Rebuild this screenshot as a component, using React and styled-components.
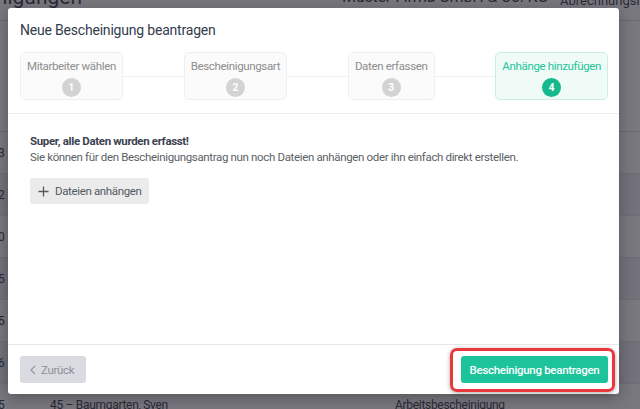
import React from "react";
import styled, { createGlobalStyle } from "styled-components";

const GlobalStyle = createGlobalStyle`
  html, body {
    margin: 0;
    padding: 0;
  }
  body {
    font-family: Roboto, "Liberation Sans", Arial, sans-serif;
    background: #ffffff;
  }
`;

const Screen = styled.div`
  position: relative;
  width: 640px;
  height: 409px;
  overflow: hidden;
`;

/* page behind the dialog */
const Page = styled.div`
  display: flex;
  flex-direction: column;
  background: #f6f6f8;
  height: 100%;
`;

const PageHeader = styled.div`
  display: flex;
  flex: none;
  height: 35px;
  margin-top: -15px;
  border-bottom: 1px solid #dcdce2;
  background: #ffffff;
  color: #2d3240;
  line-height: 24px;
`;

const PageTitle = styled.div`
  font-size: 21px;
  width: 342px;
  margin-left: -78px;
  flex: none;
  white-space: nowrap;
`;

const Company = styled.div`
  font-size: 16px;
  letter-spacing: -0.2px;
  width: 218px;
  flex: none;
  margin-left: 78px;
  white-space: nowrap;
`;

const Accounting = styled.div`
  font-size: 13px;
  white-space: nowrap;
  padding-top: 4px;
`;

const Tabs = styled.div`
  flex: none;
  height: 110px;
  border-bottom: 1px solid #dcdce2;
  background: #ffffff;
`;

const Row = styled.div`
  display: flex;
  align-items: center;
  flex: none;
  height: 41px;
  border-bottom: 1px solid #e4e4ea;
  background: ${({ $alt }) => ($alt ? "#f0f0f3" : "#ffffff")};
  font-size: 12px;
  letter-spacing: -0.3px;
  color: #2d3240;
`;

const RowNo = styled.div`
  width: 52px;
  margin-left: -2px;
`;

const RowName = styled.div`
  width: 345px;
`;

/* dialog */
const Backdrop = styled.div`
  position: absolute;
  inset: 0;
  background: rgba(38, 37, 48, 0.62);
`;

const Modal = styled.div`
  position: absolute;
  top: 8px;
  left: 8px;
  width: 611px;
  height: 386px;
  background: #ffffff;
  border-radius: 3px;
  box-shadow: 0 4px 16px rgba(0, 0, 0, 0.3);
  display: flex;
  flex-direction: column;
`;

const ModalHeader = styled.div`
  padding: 12px 11px 13px 12px;
  border-bottom: 1px solid #ececee;
`;

const Title = styled.h2`
  margin: 0 0 12px;
  font-size: 14px;
  letter-spacing: -0.2px;
  line-height: 20px;
  font-weight: 400;
  color: #343c4d;
`;

const Stepper = styled.div`
  display: flex;
  align-items: center;
`;

const Connector = styled.div`
  flex: 1;
  height: 1px;
  background: #f1f1f2;
`;

const Step = styled.div`
  display: flex;
  flex-direction: column;
  align-items: center;
  box-sizing: border-box;
  height: 48px;
  padding: 5px 6px 0;
  border-radius: 5px;
  border: 1px solid ${({ $active }) => ($active ? "#cdeee3" : "#efefef")};
  background: ${({ $active }) => ($active ? "#f0fbf7" : "#fbfbfb")};
`;

const StepLabel = styled.div`
  font-size: 11.5px;
  letter-spacing: -0.35px;
  line-height: 16px;
  color: ${({ $active }) => ($active ? "#24c49b" : "#8d8d8d")};
  white-space: nowrap;
`;

const StepNumber = styled.div`
  margin-top: 4px;
  width: 19px;
  height: 19px;
  border-radius: 50%;
  display: flex;
  align-items: center;
  justify-content: center;
  font-size: 10px;
  font-weight: 700;
  color: #ffffff;
  background: ${({ $active }) => ($active ? "#16b98e" : "#d3d3d3")};
`;

const Body = styled.div`
  flex: 1;
  padding: 19px 22px 0;
  font-size: 11.5px;
  letter-spacing: -0.35px;
  line-height: 16px;
`;

const Lead = styled.div`
  font-weight: 700;
  color: #3b4250;
`;

const Text = styled.div`
  color: #5b5f66;
`;

const AttachButton = styled.button`
  margin-top: 13px;
  display: inline-flex;
  align-items: center;
  gap: 6px;
  height: 26px;
  width: 119px;
  padding: 0 0 0 8px;
  border: none;
  border-radius: 3px;
  background: #ebebeb;
  color: #555960;
  font-family: inherit;
  font-size: 11.5px;
  letter-spacing: -0.35px;
`;

const Footer = styled.div`
  display: flex;
  justify-content: space-between;
  align-items: center;
  padding: 11px 11px 11px 12px;
  border-top: 1px solid #e6e6e8;
`;

const BackButton = styled.button`
  display: inline-flex;
  align-items: center;
  gap: 5px;
  height: 27px;
  width: 66px;
  padding: 0 0 0 10px;
  border: none;
  border-radius: 3px;
  background: #d9dbe0;
  color: #8c9099;
  font-family: inherit;
  font-size: 11.5px;
  letter-spacing: -0.35px;
`;

const Highlight = styled.span`
  position: relative;
  display: inline-flex;

  &::after {
    content: "";
    position: absolute;
    top: -8px;
    right: -7px;
    bottom: -9px;
    left: -11px;
    border: 3px solid #e8383b;
    border-radius: 7px;
    box-shadow: 0 1px 4px rgba(0, 0, 0, 0.35);
    pointer-events: none;
  }
`;

const PrimaryButton = styled.button`
  height: 27px;
  width: 147px;
  padding: 0;
  border: none;
  border-radius: 3px;
  background: #1cc39b;
  color: #ffffff;
  font-family: inherit;
  font-size: 11.5px;
  letter-spacing: -0.3px;
  font-weight: 500;
  white-space: nowrap;
`;

const PlusIcon = () => (
  <svg width="11" height="11" viewBox="0 0 11 11">
    <path d="M5.5 0.5v10M0.5 5.5h10" stroke="#555960" strokeWidth="1.3" fill="none" />
  </svg>
);

const ChevronLeft = () => (
  <svg width="6" height="10" viewBox="0 0 6 10">
    <path d="M5 0.8L1 5l4 4.2" stroke="#8c9099" strokeWidth="1.1" fill="none" />
  </svg>
);

const steps = [
  { label: "Mitarbeiter wählen" },
  { label: "Bescheinigungsart" },
  { label: "Daten erfassen" },
  { label: "Anhänge hinzufügen", active: true },
];

const rows = [
  { no: "3", name: "", type: "", alt: false },
  { no: "2", name: "12 – Fischer, Anna", type: "Arbeitsbescheinigung", alt: true },
  { no: "0", name: "21 – Schmidt, Lukas", type: "Arbeitsbescheinigung", alt: false },
  { no: "5", name: "33 – Weber, Julia", type: "Arbeitsbescheinigung", alt: true },
  { no: "5", name: "38 – Wagner, Tim", type: "Arbeitsbescheinigung", alt: false },
  { no: "6", name: "41 – Becker, Laura", type: "Arbeitsbescheinigung", alt: true },
  { no: "5", name: "45 – Baumgarten, Sven", type: "Arbeitsbescheinigung", alt: false },
];

export default function App() {
  return (
    <Screen>
      <GlobalStyle />
      <Page>
        <PageHeader>
          <PageTitle>Bescheinigungen</PageTitle>
          <Company>Muster-Firma GmbH &amp; Co. KG</Company>
          <Accounting>Abrechnungsmonat</Accounting>
        </PageHeader>
        <Tabs />
        {rows.map((r, i) => (
          <Row key={i} $alt={r.alt}>
            <RowNo>{r.no}</RowNo>
            <RowName>{r.name}</RowName>
            <div>{r.type}</div>
          </Row>
        ))}
      </Page>
      <Backdrop />
      <Modal>
        <ModalHeader>
          <Title>Neue Bescheinigung beantragen</Title>
          <Stepper>
            {steps.map((s, i) => (
              <React.Fragment key={s.label}>
                {i > 0 && <Connector />}
                <Step $active={s.active}>
                  <StepLabel $active={s.active}>{s.label}</StepLabel>
                  <StepNumber $active={s.active}>{i + 1}</StepNumber>
                </Step>
              </React.Fragment>
            ))}
          </Stepper>
        </ModalHeader>
        <Body>
          <Lead>Super, alle Daten wurden erfasst!</Lead>
          <Text>
            Sie können für den Bescheinigungsantrag nun noch Dateien anhängen oder ihn einfach direkt erstellen.
          </Text>
          <AttachButton>
            <PlusIcon />
            Dateien anhängen
          </AttachButton>
        </Body>
        <Footer>
          <BackButton>
            <ChevronLeft />
            Zurück
          </BackButton>
          <Highlight>
            <PrimaryButton>Bescheinigung beantragen</PrimaryButton>
          </Highlight>
        </Footer>
      </Modal>
    </Screen>
  );
}
